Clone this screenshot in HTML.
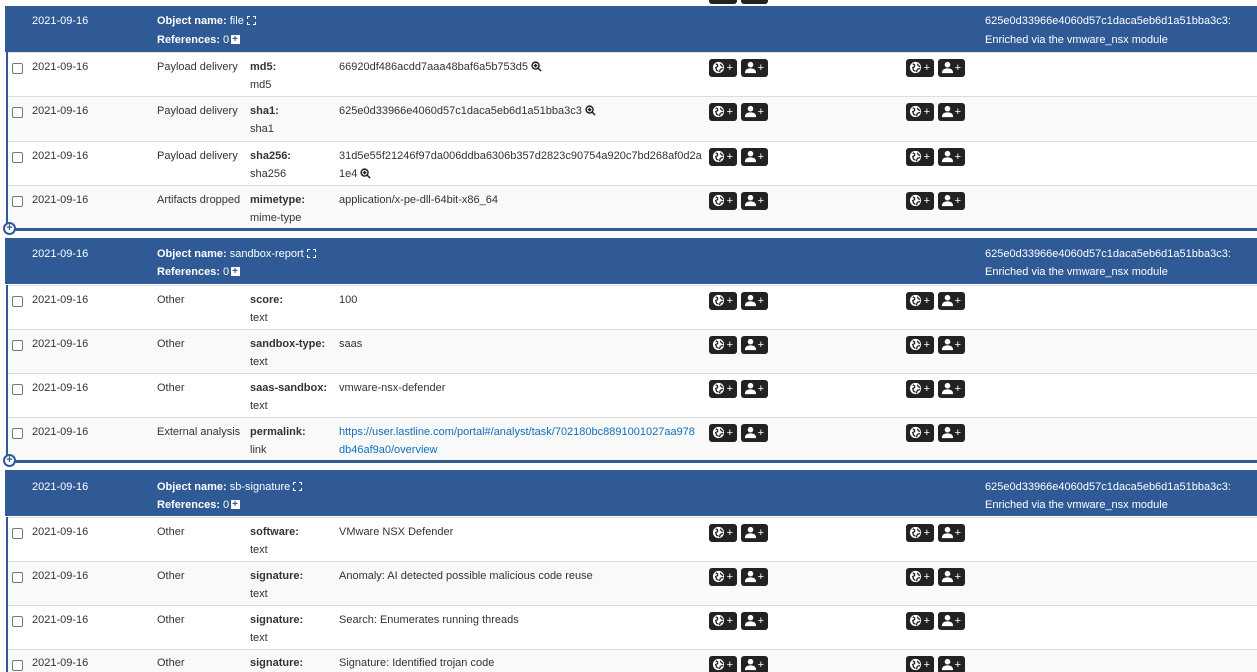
<!DOCTYPE html>
<html><head><meta charset="utf-8"><style>
*{margin:0;padding:0;box-sizing:border-box}
html,body{width:1257px;height:672px;overflow:hidden}
body{background:#fff;font-family:"Liberation Sans",Arial,sans-serif;font-size:11px;color:#333;position:relative}
.hd{position:absolute;left:5px;width:1252px;height:46px;background:#2f5a96;color:#fff}
.row{position:absolute;left:8px;width:1249px;height:44px;border-top:1px solid #ddd}
.g{background:#f9f9f9}
.t{position:absolute;line-height:18px;white-space:nowrap}
.cb{position:absolute;left:4px;top:10px;width:11px;height:11px;border:1px solid #777;border-radius:2px;background:#fff}
.vl{position:absolute;left:6px;width:2px;background:#2f5a96}
.bl{position:absolute;left:7px;width:1250px;height:3px;background:#2f5a96}
.pl{position:absolute;left:3px;width:13px;height:13px;border:2px solid #2f5a96;border-radius:50%;background:#fff;color:#2f5a96;font-weight:bold;font-size:11px;line-height:9px;text-align:center}
.btn{position:absolute;top:6px;height:18px;background:#222;border-radius:3px;color:#fff;font-size:11px}
.btn svg{position:absolute;left:3px;top:2px}
.btn span{position:absolute;right:4px;top:1px;line-height:16px}
.b{font-weight:bold}
.sq{display:inline-block;width:9px;height:9px;background:#fff;vertical-align:-1px;margin-left:2px;position:relative}
.sq:after{content:"+";position:absolute;left:1px;top:-4px;color:#2f5a96;font-weight:bold;font-size:10px}
.ex{display:inline-block;width:9px;height:9px;border:1px dashed #fff;vertical-align:-1px;margin-left:3px}
.mg{vertical-align:-2px;margin-left:3px}
a{color:#0e6fc1;text-decoration:none}
</style></head><body>

<!-- object 1 -->
<div class="hd" style="top:6px">
<div class="t" style="left:27px;top:6px">2021-09-16</div>
<div class="t" style="left:152px;top:6px"><span class="b">Object name:</span> file<span class="ex"></span></div>
<div class="t" style="left:152px;top:25px"><span class="b">References:</span> 0<span class="sq"></span></div>
<div class="t" style="left:980px;top:6px">625e0d33966e4060d57c1daca5eb6d1a51bba3c3:</div>
<div class="t" style="left:980px;top:25px">Enriched via the vmware_nsx module</div>
</div>

<div class="row" style="top:52px"><div class="cb"></div><div class="t" style="left:24px;top:5px">2021-09-16</div><div class="t" style="left:149px;top:5px">Payload delivery</div><div class="t b" style="left:242px;top:5px">md5:</div><div class="t" style="left:242px;top:23px">md5</div><div class="t" style="left:331px;top:5px">66920df486acdd7aaa48baf6a5b753d5<svg class="mg" width="11" height="11" viewBox="0 0 12 12"><circle cx="5" cy="5" r="3.8" fill="none" stroke="#222" stroke-width="1.6"/><path d="M7.8 7.8L11 11M3 5h4M5 3v4" stroke="#222" stroke-width="1.6"/></svg></div>
<div class="btn" style="left:701px;width:28px"><svg width="13" height="13" viewBox="0 0 14 14"><circle cx="7" cy="7" r="6" fill="#fff"/><path d="M4 3l2 1 0 2-2 1 1 3 2 1M9 3l1 2 2 1M8 12l1-3 3-1" stroke="#222" stroke-width="1.4" fill="none"/></svg><span>+</span></div>
<div class="btn" style="left:733px;width:27px"><svg width="13" height="13" viewBox="0 0 14 14"><circle cx="7" cy="4" r="3" fill="#fff"/><path d="M1 13c0-4 3-5 6-5s6 1 6 5z" fill="#fff"/></svg><span>+</span></div>
<div class="btn" style="left:898px;width:28px"><svg width="13" height="13" viewBox="0 0 14 14"><circle cx="7" cy="7" r="6" fill="#fff"/><path d="M4 3l2 1 0 2-2 1 1 3 2 1M9 3l1 2 2 1M8 12l1-3 3-1" stroke="#222" stroke-width="1.4" fill="none"/></svg><span>+</span></div>
<div class="btn" style="left:930px;width:27px"><svg width="13" height="13" viewBox="0 0 14 14"><circle cx="7" cy="4" r="3" fill="#fff"/><path d="M1 13c0-4 3-5 6-5s6 1 6 5z" fill="#fff"/></svg><span>+</span></div></div>

<div class="row g" style="top:96px"><div class="cb"></div><div class="t" style="left:24px;top:5px">2021-09-16</div><div class="t" style="left:149px;top:5px">Payload delivery</div><div class="t b" style="left:242px;top:5px">sha1:</div><div class="t" style="left:242px;top:23px">sha1</div><div class="t" style="left:331px;top:5px">625e0d33966e4060d57c1daca5eb6d1a51bba3c3<svg class="mg" width="11" height="11" viewBox="0 0 12 12"><circle cx="5" cy="5" r="3.8" fill="none" stroke="#222" stroke-width="1.6"/><path d="M7.8 7.8L11 11M3 5h4M5 3v4" stroke="#222" stroke-width="1.6"/></svg></div>
<div class="btn" style="left:701px;width:28px"><svg width="13" height="13" viewBox="0 0 14 14"><circle cx="7" cy="7" r="6" fill="#fff"/><path d="M4 3l2 1 0 2-2 1 1 3 2 1M9 3l1 2 2 1M8 12l1-3 3-1" stroke="#222" stroke-width="1.4" fill="none"/></svg><span>+</span></div>
<div class="btn" style="left:733px;width:27px"><svg width="13" height="13" viewBox="0 0 14 14"><circle cx="7" cy="4" r="3" fill="#fff"/><path d="M1 13c0-4 3-5 6-5s6 1 6 5z" fill="#fff"/></svg><span>+</span></div>
<div class="btn" style="left:898px;width:28px"><svg width="13" height="13" viewBox="0 0 14 14"><circle cx="7" cy="7" r="6" fill="#fff"/><path d="M4 3l2 1 0 2-2 1 1 3 2 1M9 3l1 2 2 1M8 12l1-3 3-1" stroke="#222" stroke-width="1.4" fill="none"/></svg><span>+</span></div>
<div class="btn" style="left:930px;width:27px"><svg width="13" height="13" viewBox="0 0 14 14"><circle cx="7" cy="4" r="3" fill="#fff"/><path d="M1 13c0-4 3-5 6-5s6 1 6 5z" fill="#fff"/></svg><span>+</span></div></div>

<div class="row" style="top:141px"><div class="cb"></div><div class="t" style="left:24px;top:5px">2021-09-16</div><div class="t" style="left:149px;top:5px">Payload delivery</div><div class="t b" style="left:242px;top:5px">sha256:</div><div class="t" style="left:242px;top:23px">sha256</div><div class="t" style="left:331px;top:5px">31d5e55f21246f97da006ddba6306b357d2823c90754a920c7bd268af0d2a</div><div class="t" style="left:331px;top:23px">1e4<svg class="mg" width="11" height="11" viewBox="0 0 12 12"><circle cx="5" cy="5" r="3.8" fill="none" stroke="#222" stroke-width="1.6"/><path d="M7.8 7.8L11 11M3 5h4M5 3v4" stroke="#222" stroke-width="1.6"/></svg></div>
<div class="btn" style="left:701px;width:28px"><svg width="13" height="13" viewBox="0 0 14 14"><circle cx="7" cy="7" r="6" fill="#fff"/><path d="M4 3l2 1 0 2-2 1 1 3 2 1M9 3l1 2 2 1M8 12l1-3 3-1" stroke="#222" stroke-width="1.4" fill="none"/></svg><span>+</span></div>
<div class="btn" style="left:733px;width:27px"><svg width="13" height="13" viewBox="0 0 14 14"><circle cx="7" cy="4" r="3" fill="#fff"/><path d="M1 13c0-4 3-5 6-5s6 1 6 5z" fill="#fff"/></svg><span>+</span></div>
<div class="btn" style="left:898px;width:28px"><svg width="13" height="13" viewBox="0 0 14 14"><circle cx="7" cy="7" r="6" fill="#fff"/><path d="M4 3l2 1 0 2-2 1 1 3 2 1M9 3l1 2 2 1M8 12l1-3 3-1" stroke="#222" stroke-width="1.4" fill="none"/></svg><span>+</span></div>
<div class="btn" style="left:930px;width:27px"><svg width="13" height="13" viewBox="0 0 14 14"><circle cx="7" cy="4" r="3" fill="#fff"/><path d="M1 13c0-4 3-5 6-5s6 1 6 5z" fill="#fff"/></svg><span>+</span></div></div>

<div class="row g" style="top:185px"><div class="cb"></div><div class="t" style="left:24px;top:5px">2021-09-16</div><div class="t" style="left:149px;top:5px">Artifacts dropped</div><div class="t b" style="left:242px;top:5px">mimetype:</div><div class="t" style="left:242px;top:23px">mime-type</div><div class="t" style="left:331px;top:5px">application/x-pe-dll-64bit-x86_64</div>
<div class="btn" style="left:701px;width:28px"><svg width="13" height="13" viewBox="0 0 14 14"><circle cx="7" cy="7" r="6" fill="#fff"/><path d="M4 3l2 1 0 2-2 1 1 3 2 1M9 3l1 2 2 1M8 12l1-3 3-1" stroke="#222" stroke-width="1.4" fill="none"/></svg><span>+</span></div>
<div class="btn" style="left:733px;width:27px"><svg width="13" height="13" viewBox="0 0 14 14"><circle cx="7" cy="4" r="3" fill="#fff"/><path d="M1 13c0-4 3-5 6-5s6 1 6 5z" fill="#fff"/></svg><span>+</span></div>
<div class="btn" style="left:898px;width:28px"><svg width="13" height="13" viewBox="0 0 14 14"><circle cx="7" cy="7" r="6" fill="#fff"/><path d="M4 3l2 1 0 2-2 1 1 3 2 1M9 3l1 2 2 1M8 12l1-3 3-1" stroke="#222" stroke-width="1.4" fill="none"/></svg><span>+</span></div>
<div class="btn" style="left:930px;width:27px"><svg width="13" height="13" viewBox="0 0 14 14"><circle cx="7" cy="4" r="3" fill="#fff"/><path d="M1 13c0-4 3-5 6-5s6 1 6 5z" fill="#fff"/></svg><span>+</span></div></div>

<div class="vl" style="top:52px;height:178px"></div>
<div class="bl" style="top:228px"></div>
<div class="pl" style="top:222px">+</div>

<!-- object 2 -->
<div class="hd" style="top:238px">
<div class="t" style="left:27px;top:7px">2021-09-16</div>
<div class="t" style="left:152px;top:7px"><span class="b">Object name:</span> sandbox-report<span class="ex"></span></div>
<div class="t" style="left:152px;top:25px"><span class="b">References:</span> 0<span class="sq"></span></div>
<div class="t" style="left:980px;top:7px">625e0d33966e4060d57c1daca5eb6d1a51bba3c3:</div>
<div class="t" style="left:980px;top:25px">Enriched via the vmware_nsx module</div>
</div>

<div class="row" style="top:285px"><div class="cb"></div><div class="t" style="left:24px;top:5px">2021-09-16</div><div class="t" style="left:149px;top:5px">Other</div><div class="t b" style="left:242px;top:5px">score:</div><div class="t" style="left:242px;top:23px">text</div><div class="t" style="left:331px;top:5px">100</div>
<div class="btn" style="left:701px;width:28px"><svg width="13" height="13" viewBox="0 0 14 14"><circle cx="7" cy="7" r="6" fill="#fff"/><path d="M4 3l2 1 0 2-2 1 1 3 2 1M9 3l1 2 2 1M8 12l1-3 3-1" stroke="#222" stroke-width="1.4" fill="none"/></svg><span>+</span></div>
<div class="btn" style="left:733px;width:27px"><svg width="13" height="13" viewBox="0 0 14 14"><circle cx="7" cy="4" r="3" fill="#fff"/><path d="M1 13c0-4 3-5 6-5s6 1 6 5z" fill="#fff"/></svg><span>+</span></div>
<div class="btn" style="left:898px;width:28px"><svg width="13" height="13" viewBox="0 0 14 14"><circle cx="7" cy="7" r="6" fill="#fff"/><path d="M4 3l2 1 0 2-2 1 1 3 2 1M9 3l1 2 2 1M8 12l1-3 3-1" stroke="#222" stroke-width="1.4" fill="none"/></svg><span>+</span></div>
<div class="btn" style="left:930px;width:27px"><svg width="13" height="13" viewBox="0 0 14 14"><circle cx="7" cy="4" r="3" fill="#fff"/><path d="M1 13c0-4 3-5 6-5s6 1 6 5z" fill="#fff"/></svg><span>+</span></div></div>

<div class="row g" style="top:329px"><div class="cb"></div><div class="t" style="left:24px;top:5px">2021-09-16</div><div class="t" style="left:149px;top:5px">Other</div><div class="t b" style="left:242px;top:5px">sandbox-type:</div><div class="t" style="left:242px;top:23px">text</div><div class="t" style="left:331px;top:5px">saas</div>
<div class="btn" style="left:701px;width:28px"><svg width="13" height="13" viewBox="0 0 14 14"><circle cx="7" cy="7" r="6" fill="#fff"/><path d="M4 3l2 1 0 2-2 1 1 3 2 1M9 3l1 2 2 1M8 12l1-3 3-1" stroke="#222" stroke-width="1.4" fill="none"/></svg><span>+</span></div>
<div class="btn" style="left:733px;width:27px"><svg width="13" height="13" viewBox="0 0 14 14"><circle cx="7" cy="4" r="3" fill="#fff"/><path d="M1 13c0-4 3-5 6-5s6 1 6 5z" fill="#fff"/></svg><span>+</span></div>
<div class="btn" style="left:898px;width:28px"><svg width="13" height="13" viewBox="0 0 14 14"><circle cx="7" cy="7" r="6" fill="#fff"/><path d="M4 3l2 1 0 2-2 1 1 3 2 1M9 3l1 2 2 1M8 12l1-3 3-1" stroke="#222" stroke-width="1.4" fill="none"/></svg><span>+</span></div>
<div class="btn" style="left:930px;width:27px"><svg width="13" height="13" viewBox="0 0 14 14"><circle cx="7" cy="4" r="3" fill="#fff"/><path d="M1 13c0-4 3-5 6-5s6 1 6 5z" fill="#fff"/></svg><span>+</span></div></div>

<div class="row" style="top:373px"><div class="cb"></div><div class="t" style="left:24px;top:5px">2021-09-16</div><div class="t" style="left:149px;top:5px">Other</div><div class="t b" style="left:242px;top:5px">saas-sandbox:</div><div class="t" style="left:242px;top:23px">text</div><div class="t" style="left:331px;top:5px">vmware-nsx-defender</div>
<div class="btn" style="left:701px;width:28px"><svg width="13" height="13" viewBox="0 0 14 14"><circle cx="7" cy="7" r="6" fill="#fff"/><path d="M4 3l2 1 0 2-2 1 1 3 2 1M9 3l1 2 2 1M8 12l1-3 3-1" stroke="#222" stroke-width="1.4" fill="none"/></svg><span>+</span></div>
<div class="btn" style="left:733px;width:27px"><svg width="13" height="13" viewBox="0 0 14 14"><circle cx="7" cy="4" r="3" fill="#fff"/><path d="M1 13c0-4 3-5 6-5s6 1 6 5z" fill="#fff"/></svg><span>+</span></div>
<div class="btn" style="left:898px;width:28px"><svg width="13" height="13" viewBox="0 0 14 14"><circle cx="7" cy="7" r="6" fill="#fff"/><path d="M4 3l2 1 0 2-2 1 1 3 2 1M9 3l1 2 2 1M8 12l1-3 3-1" stroke="#222" stroke-width="1.4" fill="none"/></svg><span>+</span></div>
<div class="btn" style="left:930px;width:27px"><svg width="13" height="13" viewBox="0 0 14 14"><circle cx="7" cy="4" r="3" fill="#fff"/><path d="M1 13c0-4 3-5 6-5s6 1 6 5z" fill="#fff"/></svg><span>+</span></div></div>

<div class="row g" style="top:417px"><div class="cb"></div><div class="t" style="left:24px;top:5px">2021-09-16</div><div class="t" style="left:149px;top:5px">External analysis</div><div class="t b" style="left:242px;top:5px">permalink:</div><div class="t" style="left:242px;top:23px">link</div><div class="t" style="left:331px;top:5px"><a>https://user.lastline.com/portal#/analyst/task/702180bc8891001027aa978</a></div><div class="t" style="left:331px;top:23px"><a>db46af9a0/overview</a></div>
<div class="btn" style="left:701px;width:28px"><svg width="13" height="13" viewBox="0 0 14 14"><circle cx="7" cy="7" r="6" fill="#fff"/><path d="M4 3l2 1 0 2-2 1 1 3 2 1M9 3l1 2 2 1M8 12l1-3 3-1" stroke="#222" stroke-width="1.4" fill="none"/></svg><span>+</span></div>
<div class="btn" style="left:733px;width:27px"><svg width="13" height="13" viewBox="0 0 14 14"><circle cx="7" cy="4" r="3" fill="#fff"/><path d="M1 13c0-4 3-5 6-5s6 1 6 5z" fill="#fff"/></svg><span>+</span></div>
<div class="btn" style="left:898px;width:28px"><svg width="13" height="13" viewBox="0 0 14 14"><circle cx="7" cy="7" r="6" fill="#fff"/><path d="M4 3l2 1 0 2-2 1 1 3 2 1M9 3l1 2 2 1M8 12l1-3 3-1" stroke="#222" stroke-width="1.4" fill="none"/></svg><span>+</span></div>
<div class="btn" style="left:930px;width:27px"><svg width="13" height="13" viewBox="0 0 14 14"><circle cx="7" cy="4" r="3" fill="#fff"/><path d="M1 13c0-4 3-5 6-5s6 1 6 5z" fill="#fff"/></svg><span>+</span></div></div>

<div class="vl" style="top:285px;height:177px"></div>
<div class="bl" style="top:460px"></div>
<div class="pl" style="top:454px">+</div>

<!-- object 3 -->
<div class="hd" style="top:470px">
<div class="t" style="left:27px;top:8px">2021-09-16</div>
<div class="t" style="left:152px;top:8px"><span class="b">Object name:</span> sb-signature<span class="ex"></span></div>
<div class="t" style="left:152px;top:26px"><span class="b">References:</span> 0<span class="sq"></span></div>
<div class="t" style="left:980px;top:8px">625e0d33966e4060d57c1daca5eb6d1a51bba3c3:</div>
<div class="t" style="left:980px;top:26px">Enriched via the vmware_nsx module</div>
</div>

<div class="row" style="top:517px"><div class="cb"></div><div class="t" style="left:24px;top:5px">2021-09-16</div><div class="t" style="left:149px;top:5px">Other</div><div class="t b" style="left:242px;top:5px">software:</div><div class="t" style="left:242px;top:23px">text</div><div class="t" style="left:331px;top:5px">VMware NSX Defender</div>
<div class="btn" style="left:701px;width:28px"><svg width="13" height="13" viewBox="0 0 14 14"><circle cx="7" cy="7" r="6" fill="#fff"/><path d="M4 3l2 1 0 2-2 1 1 3 2 1M9 3l1 2 2 1M8 12l1-3 3-1" stroke="#222" stroke-width="1.4" fill="none"/></svg><span>+</span></div>
<div class="btn" style="left:733px;width:27px"><svg width="13" height="13" viewBox="0 0 14 14"><circle cx="7" cy="4" r="3" fill="#fff"/><path d="M1 13c0-4 3-5 6-5s6 1 6 5z" fill="#fff"/></svg><span>+</span></div>
<div class="btn" style="left:898px;width:28px"><svg width="13" height="13" viewBox="0 0 14 14"><circle cx="7" cy="7" r="6" fill="#fff"/><path d="M4 3l2 1 0 2-2 1 1 3 2 1M9 3l1 2 2 1M8 12l1-3 3-1" stroke="#222" stroke-width="1.4" fill="none"/></svg><span>+</span></div>
<div class="btn" style="left:930px;width:27px"><svg width="13" height="13" viewBox="0 0 14 14"><circle cx="7" cy="4" r="3" fill="#fff"/><path d="M1 13c0-4 3-5 6-5s6 1 6 5z" fill="#fff"/></svg><span>+</span></div></div>

<div class="row g" style="top:561px"><div class="cb"></div><div class="t" style="left:24px;top:5px">2021-09-16</div><div class="t" style="left:149px;top:5px">Other</div><div class="t b" style="left:242px;top:5px">signature:</div><div class="t" style="left:242px;top:23px">text</div><div class="t" style="left:331px;top:5px">Anomaly: AI detected possible malicious code reuse</div>
<div class="btn" style="left:701px;width:28px"><svg width="13" height="13" viewBox="0 0 14 14"><circle cx="7" cy="7" r="6" fill="#fff"/><path d="M4 3l2 1 0 2-2 1 1 3 2 1M9 3l1 2 2 1M8 12l1-3 3-1" stroke="#222" stroke-width="1.4" fill="none"/></svg><span>+</span></div>
<div class="btn" style="left:733px;width:27px"><svg width="13" height="13" viewBox="0 0 14 14"><circle cx="7" cy="4" r="3" fill="#fff"/><path d="M1 13c0-4 3-5 6-5s6 1 6 5z" fill="#fff"/></svg><span>+</span></div>
<div class="btn" style="left:898px;width:28px"><svg width="13" height="13" viewBox="0 0 14 14"><circle cx="7" cy="7" r="6" fill="#fff"/><path d="M4 3l2 1 0 2-2 1 1 3 2 1M9 3l1 2 2 1M8 12l1-3 3-1" stroke="#222" stroke-width="1.4" fill="none"/></svg><span>+</span></div>
<div class="btn" style="left:930px;width:27px"><svg width="13" height="13" viewBox="0 0 14 14"><circle cx="7" cy="4" r="3" fill="#fff"/><path d="M1 13c0-4 3-5 6-5s6 1 6 5z" fill="#fff"/></svg><span>+</span></div></div>

<div class="row" style="top:605px"><div class="cb"></div><div class="t" style="left:24px;top:5px">2021-09-16</div><div class="t" style="left:149px;top:5px">Other</div><div class="t b" style="left:242px;top:5px">signature:</div><div class="t" style="left:242px;top:23px">text</div><div class="t" style="left:331px;top:5px">Search: Enumerates running threads</div>
<div class="btn" style="left:701px;width:28px"><svg width="13" height="13" viewBox="0 0 14 14"><circle cx="7" cy="7" r="6" fill="#fff"/><path d="M4 3l2 1 0 2-2 1 1 3 2 1M9 3l1 2 2 1M8 12l1-3 3-1" stroke="#222" stroke-width="1.4" fill="none"/></svg><span>+</span></div>
<div class="btn" style="left:733px;width:27px"><svg width="13" height="13" viewBox="0 0 14 14"><circle cx="7" cy="4" r="3" fill="#fff"/><path d="M1 13c0-4 3-5 6-5s6 1 6 5z" fill="#fff"/></svg><span>+</span></div>
<div class="btn" style="left:898px;width:28px"><svg width="13" height="13" viewBox="0 0 14 14"><circle cx="7" cy="7" r="6" fill="#fff"/><path d="M4 3l2 1 0 2-2 1 1 3 2 1M9 3l1 2 2 1M8 12l1-3 3-1" stroke="#222" stroke-width="1.4" fill="none"/></svg><span>+</span></div>
<div class="btn" style="left:930px;width:27px"><svg width="13" height="13" viewBox="0 0 14 14"><circle cx="7" cy="4" r="3" fill="#fff"/><path d="M1 13c0-4 3-5 6-5s6 1 6 5z" fill="#fff"/></svg><span>+</span></div></div>

<div class="row g" style="top:649px;height:23px"><div class="cb"></div><div class="t" style="left:24px;top:4px">2021-09-16</div><div class="t" style="left:149px;top:4px">Other</div><div class="t b" style="left:242px;top:4px">signature:</div><div class="t" style="left:331px;top:4px">Signature: Identified trojan code</div>
<div class="btn" style="left:701px;width:28px"><svg width="13" height="13" viewBox="0 0 14 14"><circle cx="7" cy="7" r="6" fill="#fff"/><path d="M4 3l2 1 0 2-2 1 1 3 2 1M9 3l1 2 2 1M8 12l1-3 3-1" stroke="#222" stroke-width="1.4" fill="none"/></svg><span>+</span></div>
<div class="btn" style="left:733px;width:27px"><svg width="13" height="13" viewBox="0 0 14 14"><circle cx="7" cy="4" r="3" fill="#fff"/><path d="M1 13c0-4 3-5 6-5s6 1 6 5z" fill="#fff"/></svg><span>+</span></div>
<div class="btn" style="left:898px;width:28px"><svg width="13" height="13" viewBox="0 0 14 14"><circle cx="7" cy="7" r="6" fill="#fff"/><path d="M4 3l2 1 0 2-2 1 1 3 2 1M9 3l1 2 2 1M8 12l1-3 3-1" stroke="#222" stroke-width="1.4" fill="none"/></svg><span>+</span></div>
<div class="btn" style="left:930px;width:27px"><svg width="13" height="13" viewBox="0 0 14 14"><circle cx="7" cy="4" r="3" fill="#fff"/><path d="M1 13c0-4 3-5 6-5s6 1 6 5z" fill="#fff"/></svg><span>+</span></div></div>

<div class="vl" style="top:517px;height:155px"></div>

<!-- top partial buttons -->
<div class="btn" style="left:709px;top:-14px;width:28px"></div>
<div class="btn" style="left:741px;top:-14px;width:27px"></div>
</body></html>
